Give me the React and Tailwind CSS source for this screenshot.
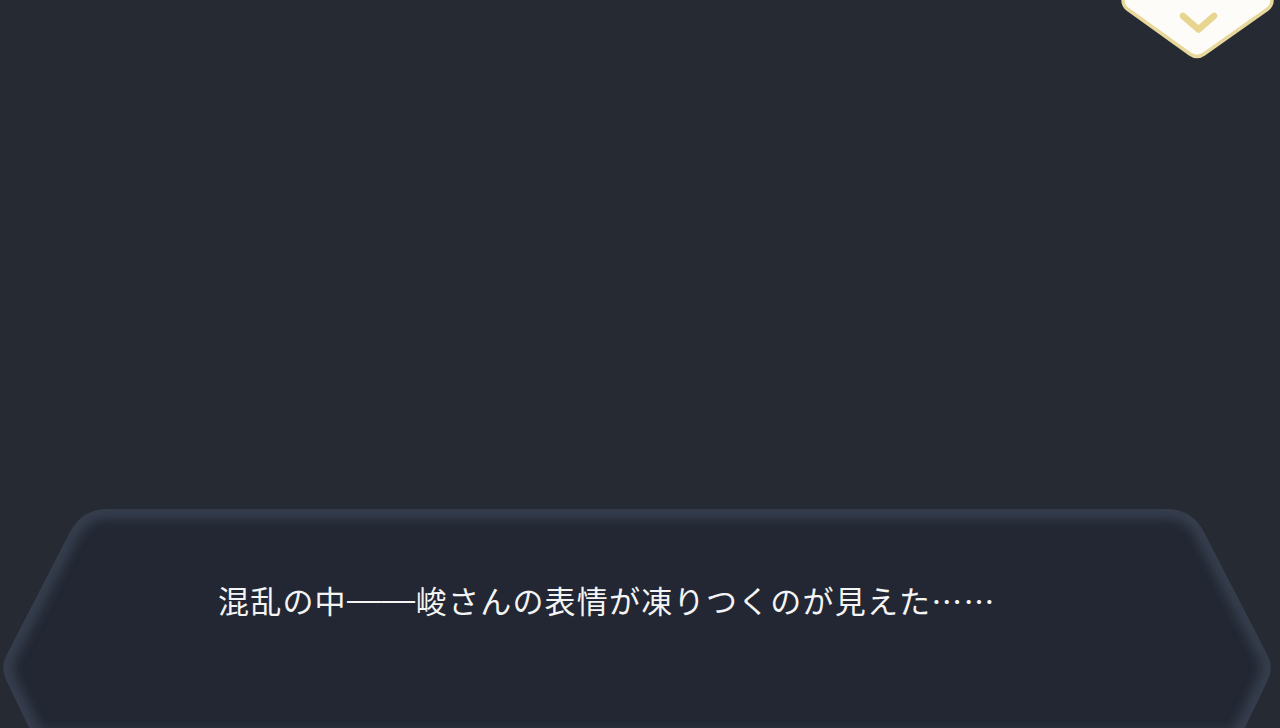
import React from "react";

function PanelShape() {
  const d =
    "M 35 232 L 6.4 172.4 Q 0 160 6.4 147.6 L 70.1 24.1 Q 82 1 108 1 L 1166 1 Q 1192 1 1203.9 24.1 L 1267.6 147.6 Q 1274 160 1267.6 172.4 L 1239 232 Z";
  return (
    <svg
      className="absolute inset-0 pointer-events-none"
      width="1280"
      height="220"
      viewBox="0 0 1280 220"
    >
      <defs>
        <clipPath id="hexclip">
          <path d={d} />
        </clipPath>
        <filter id="blur" x="-10%" y="-10%" width="120%" height="120%">
          <feGaussianBlur stdDeviation="6" />
        </filter>
        <filter id="blur2" x="-10%" y="-10%" width="120%" height="120%">
          <feGaussianBlur stdDeviation="1.5" />
        </filter>
      </defs>
      <path d={d} fill="#222733" />
      <g clipPath="url(#hexclip)">
        <path d={d} fill="none" stroke="#384050" strokeWidth="18" filter="url(#blur)" />
        <path d={d} fill="none" stroke="#343b4a" strokeWidth="4" filter="url(#blur2)" />
      </g>
    </svg>
  );
}

function Badge() {
  return (
    <svg
      className="absolute top-0 left-[1120px]"
      width="156"
      height="64"
      viewBox="0 0 156 64"
    >
      <path
        d="M 3 -10 L 3 0 Q 3 6 8 9.5 L 70 54 Q 77 59 84 54 L 147 9.5 Q 152 6 152 0 L 152 -10 Z"
        fill="#fdfcf8"
        stroke="#e9d89c"
        strokeWidth="3.5"
        strokeLinejoin="round"
      />
      <path
        d="M 63 16 L 78.5 29.5 L 94 16"
        fill="none"
        stroke="#e8d690"
        strokeWidth="6.5"
        strokeLinecap="round"
        strokeLinejoin="round"
      />
    </svg>
  );
}

export default function App() {
  return (
    <div className="relative w-[1280px] h-[728px] overflow-hidden bg-[#262a33] flex flex-col">
      <Badge />
      <div className="flex-1" />
      <div className="relative h-[220px] w-full">
        <PanelShape />
        <div className="relative pt-[72px] pl-[218px]">
          <p
            className="text-[31px] leading-[40px] tracking-[1.2px] text-[#f4f4f4] [font-feature-settings:'fwid']"
            style={{ fontFamily: '"Noto Sans CJK JP", "Noto Sans", sans-serif' }}
          >
            混乱の中
            <span
              className="inline-block origin-left scale-x-[1.1] -translate-y-[3px] mr-[7px] tracking-[0px] [font-feature-settings:normal]"
              style={{ fontFamily: '"Liberation Sans", sans-serif' }}
            >
              ——
            </span>
            峻さんの表情が凍りつくのが見えた……
          </p>
        </div>
      </div>
    </div>
  );
}
